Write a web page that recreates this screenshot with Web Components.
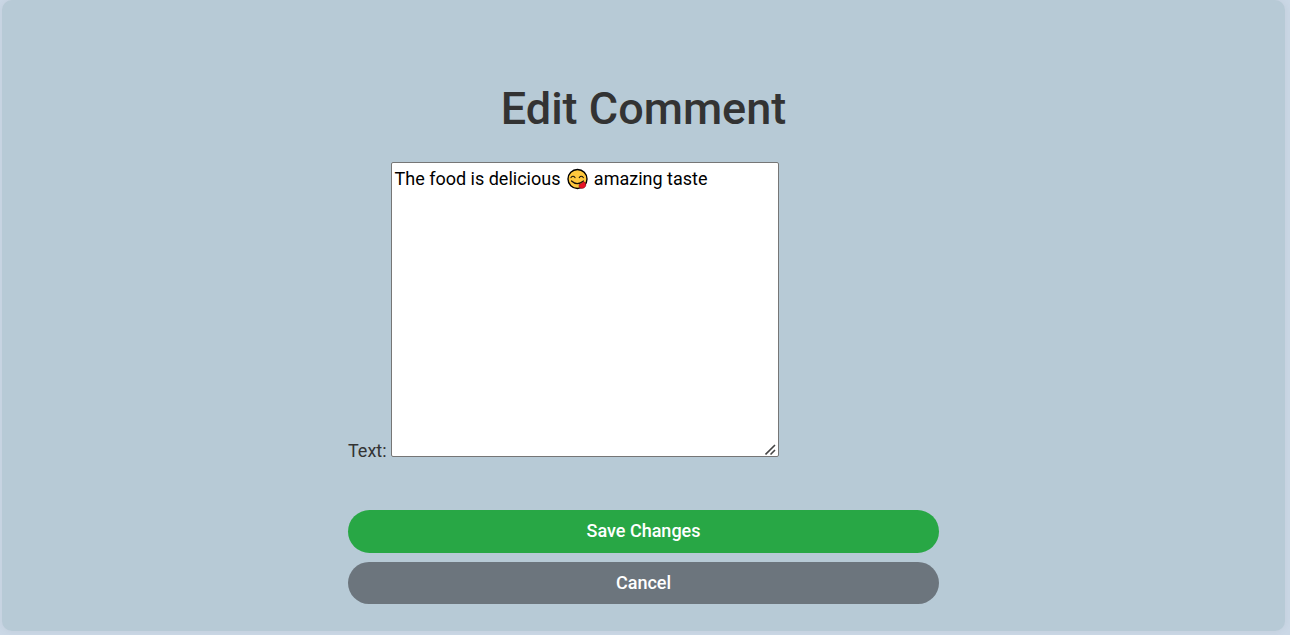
<!DOCTYPE html>
<html lang="en"><head><meta charset="utf-8"><title>Edit Comment</title>
<style>html,body{margin:0;height:100%}body{background:#cbd8e6;overflow:hidden;font-family:Roboto,sans-serif;color:#333}</style></head>
<body>
<edit-page><comment-field label="Text:"><span>The food is delicious </span><yum-emoji></yum-emoji><span> amazing taste</span></comment-field>
<pill-button>Save Changes</pill-button><pill-button class="secondary">Cancel</pill-button></edit-page>
<script>
const define=(name,html)=>customElements.define(name,class extends HTMLElement{
  constructor(){super();this.attachShadow({mode:'open'}).innerHTML=html;}
  connectedCallback(){const l=this.shadowRoot.querySelector('.label');if(l)l.textContent=this.getAttribute('label');}
});
define('edit-page',`<style>
:host{display:block;box-sizing:border-box;height:631px;margin:0 5px 0 2px;padding-top:82px;background:#b7cad6;border-radius:10px;box-shadow:0 0 10px rgba(0,0,0,.05)}
h1{margin:0 0 26px;font-size:45px;line-height:54px;font-weight:500;text-align:center}
main{width:591px;margin:0 auto;display:flex;flex-direction:column}
</style><h1>Edit Comment</h1><main><slot></slot></main>`);
define('comment-field',`<style>
:host{display:flex;align-items:flex-end;font-size:18px;height:295px;margin-bottom:53px}
.label{width:43px;line-height:27px;margin-bottom:-7px}
.box{box-sizing:border-box;width:388px;height:295px;border:1px solid #767676;border-radius:2px;background:#fff;color:#000;padding:2px 2px 0 2.5px;display:grid;grid-template-rows:27px 1fr}
.text{white-space:pre;line-height:27px}
.grip{align-self:end;justify-self:end;display:block;margin:0 -1px 0 0}
</style><span class="label"></span><div class="box"><div class="text"><slot></slot></div>
<svg class="grip" width="12" height="12" viewBox="0 0 12 12" fill="none" stroke="#444" stroke-width="1.6"><path d="M.5 10.5 10 1M5.5 10.5 10 6"/></svg></div>`);
define('yum-emoji',`<style>:host{display:inline-block;width:24px;height:22px;vertical-align:-5px;margin:0 .5px 0 0;white-space:normal;line-height:0}svg{display:block}</style><svg width="24" height="22" viewBox="0 0 24 22"><circle cx="12.5" cy="11" r="9.5" fill="#ffc83d" stroke="#000" stroke-width="1.4"/><path d="M6 9.5q2-2.5 4 0M14.3 9.5q2-2.5 4 0M6.5 13q5.5 5.2 12 0" fill="none" stroke="#17120a" stroke-width="1.2" stroke-linecap="round"/><path d="M14.5 16.3q2.5-.8 4.2-2.7 2.8 1.5 2 4.2c-1 3-5.3 3.5-6.4 1.2-.5-1-.3-1.8.2-2.7Z" fill="#e81224" stroke="#6a0711" stroke-width=".5"/></svg>`);
define('pill-button',`<style>
:host{display:block;height:43px;margin-bottom:9px}
:host(.secondary){height:42px;--fill:#6c757d}
button{display:block;width:100%;height:100%;border:0;border-radius:25px;padding:0 0 2px;background:var(--fill,#28a745);color:#fff;font:500 18px/27px Roboto,sans-serif}
</style><button><slot></slot></button>`);
</script></body></html>
